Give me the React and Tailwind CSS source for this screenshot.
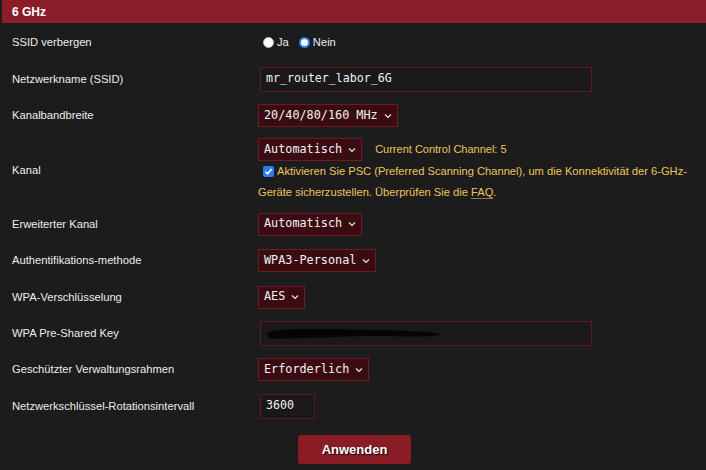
import React from 'react';

const Chevron = () => (
  <svg width="8" height="6" viewBox="0 0 8 6" className="ml-[6px] shrink-0">
    <path d="M1 1.5 L4 4.5 L7 1.5" fill="none" stroke="#e5e5e5" strokeWidth="1.2" />
  </svg>
);

const Select = ({ value }) => (
  <div className="inline-flex items-center h-[23px] pl-[5px] pr-[5px] bg-[#3a0c12] border border-[#6a1b24] text-[#f2f2f2] text-[11.8px] font-['DejaVu_Sans_Mono',monospace]">
    <span>{value}</span>
    <Chevron />
  </div>
);

const Input = ({ width, children }) => (
  <div
    className={`flex items-center h-[25px] ml-[2px] pl-[5px] border border-[#5e1820] bg-[#1a1818] text-[#f2f2f2] text-[11.6px] font-['DejaVu_Sans_Mono',monospace] ${width}`}
  >
    {children}
  </div>
);

const Row = ({ label, h, children }) => (
  <div className={`flex items-center ${h}`}>
    <div className="w-[258px] pl-3 shrink-0 text-[#ececec] text-[11.2px]">{label}</div>
    <div className="flex-1 flex items-center">{children}</div>
  </div>
);

export default function App() {
  return (
    <div className="w-[706px] h-[470px] overflow-hidden bg-[#1d1c1c] font-['Liberation_Sans',Arial,sans-serif]">
      {/* Header */}
      <div className="h-[23px] ml-[2px] bg-[#891e29] flex items-center pl-[10px] text-white font-bold text-[12px]">
        6 GHz
      </div>

      <Row label="SSID verbergen" h="h-[37px] mt-px">
        <div className="flex items-center text-[#ececec] text-[11.2px] ml-[5px]">
          <span className="w-[11px] h-[11px] rounded-full bg-white border border-[#bbb]" />
          <span className="ml-[3px]">Ja</span>
          <span className="ml-[10px] w-[11px] h-[11px] rounded-full bg-white border-[2.5px] border-[#2f7cf0]" />
          <span className="ml-[3px]">Nein</span>
        </div>
      </Row>

      <Row label="Netzwerkname (SSID)" h="h-[36px]">
        <Input width="w-[332px]">mr_router_labor_6G</Input>
      </Row>

      <Row label="Kanalbandbreite" h="h-[37px]">
        <Select value="20/40/80/160 MHz" />
      </Row>

      {/* Kanal */}
      <div className="flex h-[72px]">
        <div className="w-[258px] pl-3 shrink-0 text-[#ececec] text-[11.2px] flex items-center">Kanal</div>
        <div className="flex-1 pt-[4px]">
          <div className="flex items-center">
            <Select value="Automatisch" />
            <span className="ml-[13px] text-[#eec45c] text-[11px]">Current Control Channel: 5</span>
          </div>
          <p className="text-[#eec45c] text-[11.15px] leading-[21px] pr-2">
            <span className="inline-flex align-[-1px] ml-[5px] mr-[3px] w-[11px] h-[11px] rounded-[2px] bg-[#2f7cf0] items-center justify-center">
              <svg width="9" height="9" viewBox="0 0 9 9">
                <path d="M1.5 4.8 L3.6 6.8 L7.6 2" fill="none" stroke="white" strokeWidth="1.6" />
              </svg>
            </span>
            Aktivieren Sie PSC (Preferred Scanning Channel), um die Konnektivität der 6-GHz-Geräte sicherzustellen. Überprüfen Sie die <u className="underline-offset-2 decoration-[#8a7a50]">FAQ</u>.
          </p>
        </div>
      </div>

      <Row label="Erweiterter Kanal" h="h-[36px]">
        <Select value="Automatisch" />
      </Row>

      <Row label="Authentifikations-methode" h="h-[37px]">
        <Select value="WPA3-Personal" />
      </Row>

      <Row label="WPA-Verschlüsselung" h="h-[36px]">
        <Select value="AES" />
      </Row>

      <Row label="WPA Pre-Shared Key" h="h-[36px]">
        <Input width="w-[332px]">
          <svg width="176" height="14" viewBox="0 0 176 14">
            <path
              d="M2 6 C20 2 60 3 100 4 C130 4 160 5 174 8 C172 11 150 11 120 10 C80 10 40 12 10 13 C3 13 0 10 2 6 Z"
              fill="#050505"
            />
          </svg>
        </Input>
      </Row>

      <Row label="Geschützter Verwaltungsrahmen" h="h-[37px]">
        <Select value="Erforderlich" />
      </Row>

      <Row label="Netzwerkschlüssel-Rotationsintervall" h="h-[36px]">
        <Input width="w-[55px]">3600</Input>
      </Row>

      <div className="flex pl-[298px] mt-[11px]">
        <button className="w-[113px] h-[29px] rounded-[3px] bg-[#8a1c26] text-white font-bold text-[13px] [text-shadow:1px_1px_1px_#000]">
          Anwenden
        </button>
      </div>
    </div>
  );
}
